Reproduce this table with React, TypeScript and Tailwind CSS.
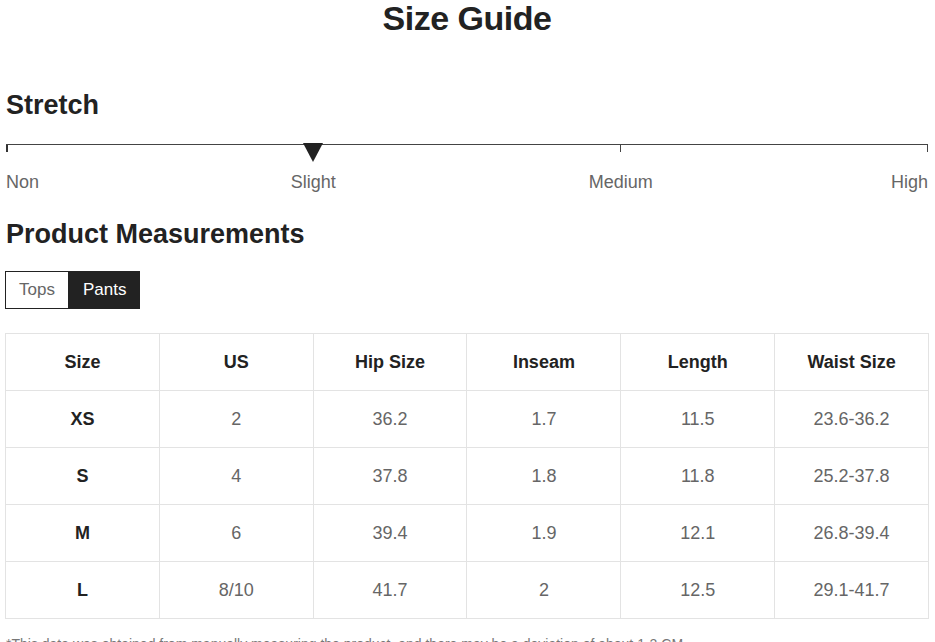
const font = { fontFamily: '"Liberation Sans", Arial, sans-serif' };

const headers = ['Size', 'US', 'Hip Size', 'Inseam', 'Length', 'Waist Size'];

const rows = [
  ['XS', '2', '36.2', '1.7', '11.5', '23.6-36.2'],
  ['S', '4', '37.8', '1.8', '11.8', '25.2-37.8'],
  ['M', '6', '39.4', '1.9', '12.1', '26.8-39.4'],
  ['L', '8/10', '41.7', '2', '12.5', '29.1-41.7'],
];

function StretchScale() {
  return (
    <div>
      <div className="relative mt-[24px] h-[27px] border-t border-[#444]">
        {/* ticks */}
        <div className="absolute left-0 top-0 h-[7px] w-[2px] bg-[#333]" />
        <div className="absolute left-[614px] top-0 h-[7px] w-px bg-[#444]" />
        <div className="absolute right-0 top-0 h-[7px] w-px bg-[#444]" />
        {/* marker */}
        <svg className="absolute left-[297px] top-[-2px]" width="20" height="19" viewBox="0 0 20 19">
          <polygon points="0,0 20,0 10,19" fill="#222" />
        </svg>
      </div>
      <div className="grid grid-cols-6 text-[18px] leading-[22px] text-[#666]">
        <span className="text-left">Non</span>
        <span className="col-span-2 text-center">Slight</span>
        <span className="col-span-2 text-center">Medium</span>
        <span className="text-right">High</span>
      </div>
    </div>
  );
}

function SizeTable() {
  return (
    <div className="mt-[24px] grid grid-cols-6 border-l border-t border-[#e3e3e3]">
      {headers.map((h) => (
        <div
          key={h}
          className="flex h-[57px] items-center justify-center border-b border-r border-[#e3e3e3] text-[18px] font-bold text-[#222]"
        >
          {h}
        </div>
      ))}
      {rows.map((r) =>
        r.map((cell, i) => (
          <div
            key={r[0] + i}
            className={`flex h-[57px] items-center justify-center border-b border-r border-[#e3e3e3] text-[18px] ${
              i === 0 ? 'font-bold text-[#222]' : 'text-[#666]'
            }`}
          >
            {cell}
          </div>
        ))
      )}
    </div>
  );
}

export default function App() {
  return (
    <div className="h-[642px] w-[935px] overflow-hidden bg-white pl-[6px] pr-[7px]" style={font}>
      <h1 className="pt-[1px] text-center text-[34px] font-bold leading-[34px] tracking-[-0.5px] text-[#222]">
        Size Guide
      </h1>

      <h2 className="mt-[55px] text-[27px] font-bold leading-[30px] text-[#222]">Stretch</h2>
      <StretchScale />

      <h2 className="mt-[26px] text-[27px] font-bold leading-[30px] text-[#222]">Product Measurements</h2>

      <div className="-ml-px mt-[22px] flex">
        <button className="h-[38px] border border-[#222] bg-white px-[13px] text-[17px] text-[#666]">Tops</button>
        <button className="h-[38px] bg-[#222] px-[14px] text-[17px] text-white">Pants</button>
      </div>

      <div className="-ml-px mr-[-1px]">
        <SizeTable />
      </div>

      <p className="mt-[15px] text-[14px] leading-[20px] text-[#777]">
        *This data was obtained from manually measuring the product, and there may be a deviation of about 1-2 CM.
      </p>
    </div>
  );
}
